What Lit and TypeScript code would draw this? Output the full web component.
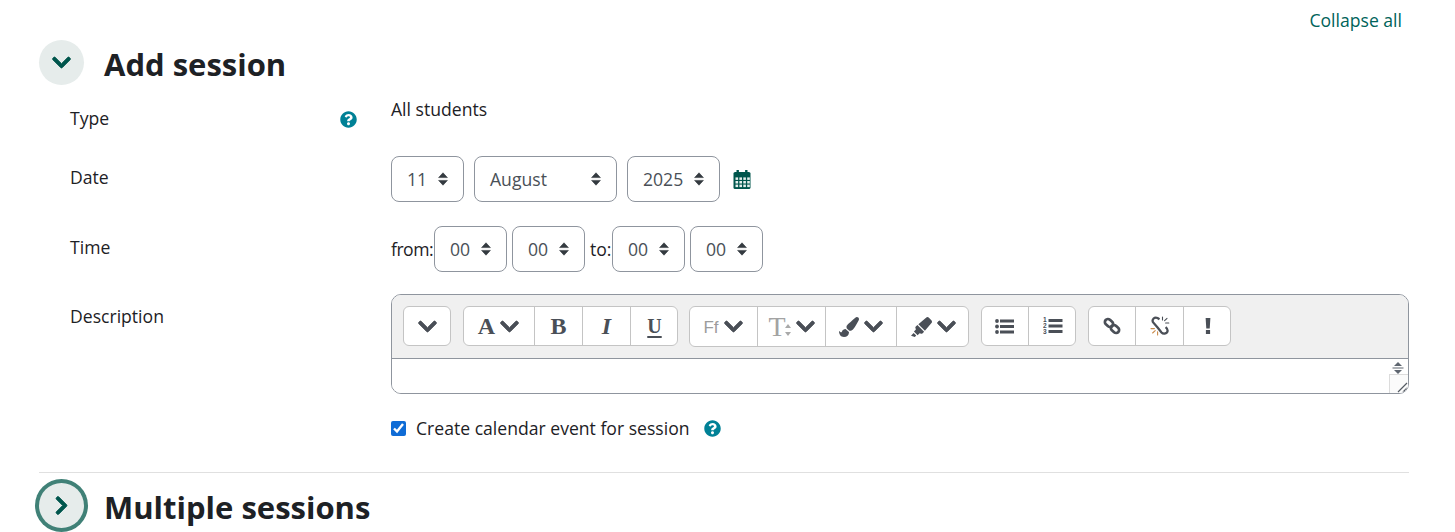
import { LitElement, html, svg, css, TemplateResult } from 'lit';
import { customElement } from 'lit/decorators.js';

const CHEVRON_DOWN =
	'M207.029 381.476L12.686 187.132c-9.373-9.373-9.373-24.569 0-33.941l22.667-22.667c9.357-9.357 24.522-9.375 33.901-.04L224 284.505l154.745-154.021c9.379-9.335 24.544-9.317 33.901.04l22.667 22.667c9.373 9.373 9.373 24.569 0 33.941L240.971 381.476c-9.373 9.372-24.569 9.372-33.942 0z';
const CHEVRON_RIGHT =
	'M285.476 272.971L91.132 467.314c-9.373 9.373-24.569 9.373-33.941 0l-22.667-22.667c-9.357-9.357-9.375-24.522-.04-33.901L188.505 256 34.484 101.255c-9.335-9.379-9.317-24.544.04-33.901l22.667-22.667c9.373-9.373 24.569-9.373 33.941 0L285.475 239.03c9.373 9.372 9.373 24.568.001 33.941z';
const QUESTION =
	'M504 256c0 136.997-111.043 248-248 248S8 392.997 8 256C8 119.083 119.043 8 256 8s248 111.083 248 248zM262.655 90c-54.497 0-89.255 22.957-116.549 63.758-3.536 5.286-2.353 12.415 2.715 16.258l34.699 26.31c5.205 3.947 12.621 3.008 16.665-2.122 17.864-22.658 30.113-35.797 57.303-35.797 20.429 0 45.698 13.148 45.698 32.958 0 14.976-12.363 22.667-32.534 33.976C247.128 238.528 216 254.941 216 296v4c0 6.627 5.373 12 12 12h56c6.627 0 12-5.373 12-12v-1.333c0-28.462 83.186-29.647 83.186-106.667 0-58.002-60.165-102-116.531-102zM256 338c-25.365 0-46 20.635-46 46 0 25.364 20.635 46 46 46s46-20.636 46-46c0-25.365-20.635-46-46-46z';
const BRUSH =
	'M167.02 309.34c-40.12 2.58-76.53 17.86-97.19 72.3-2.35 6.21-8 9.98-14.59 9.98-11.11 0-45.46-27.67-55.25-34.35C0 439.62 37.93 512 128 512c75.86 0 128-43.77 128-120.19 0-3.11-.65-6.08-.97-9.13l-88.01-73.34zM457.89 0c-15.16 0-29.37 6.71-40.21 16.45C213.27 199.05 192 203.34 192 257.09c0 13.7 3.25 26.76 8.73 38.7l63.82 53.18c7.21 1.8 14.64 3.03 22.39 3.03 62.11 0 98.11-45.47 211.16-256.46 7.38-14.35 13.9-29.85 13.9-45.99C512 20.64 486 0 457.89 0z';
const HIGHLIGHTER =
	'M0 479.98L99.92 512l35.45-35.45-67.04-67.04L0 479.98zm124.61-240.01a36.592 36.592 0 0 0-10.79 38.1l13.05 42.83-50.93 50.94 96.23 96.23 50.86-50.86 42.74 13.08c13.73 4.2 28.65-.01 38.15-10.78l35.55-41.64-173.34-173.34-41.52 35.44zm403.31-160.7l-63.2-63.2c-20.49-20.49-53.38-21.52-75.12-2.35L190.55 183.68l169.77 169.78L530.27 154.4c19.18-21.74 18.15-54.63-2.35-75.13z';

const icon = (d: string, w: number, h: number, cls: string, vb = '0 0 512 512') =>
	html`<svg class=${cls} width=${w} height=${h} viewBox=${vb} fill="currentColor"><path d=${d}></path></svg>`;

const chevron = () => icon(CHEVRON_DOWN, 19, 21, 'chev', '0 0 448 512');

const sortArrows = () => html`<svg class="sort" width="10" height="14" viewBox="0 0 10 14" fill="currentColor">
	<path d="M5 .8 L9.4 5.6 H.6 Z M5 13.2 L.6 8.4 H9.4 Z" stroke="currentColor" stroke-width=".6" stroke-linejoin="round"></path>
</svg>`;

const calendarIcon = () => html`<svg class="calendar" width="18" height="19" viewBox="0 0 18 19">
	<rect x="3.5" y="0" width="2.4" height="4" fill="#00564d"></rect>
	<rect x="12.1" y="0" width="2.4" height="4" fill="#00564d"></rect>
	<rect x=".5" y="2" width="17" height="17" rx="1.6" fill="#00564d"></rect>
	${[2.5, 6.4, 10.3, 14.2].map((x) =>
		[7.4, 11, 14.6].map((y) => svg`<rect x=${x} y=${y} width="2.6" height="2.5" fill="#e6f0ee"></rect>`),
	)}
</svg>`;

const listUl = svg`<circle cx="2" cy="3" r="1.9"></circle><circle cx="2" cy="8.5" r="1.9"></circle><circle cx="2" cy="14" r="1.9"></circle>
	<rect x="5" y="1.5" width="14" height="3"></rect><rect x="5" y="7" width="14" height="3"></rect><rect x="5" y="12.5" width="14" height="3"></rect>`;

const listOl = svg`<text x="0" y="5.4" font-size="6.6" font-weight="700" font-family="Liberation Sans, sans-serif">1</text>
	<text x="0" y="11.4" font-size="6.6" font-weight="700" font-family="Liberation Sans, sans-serif">2</text>
	<text x="0" y="17.4" font-size="6.6" font-weight="700" font-family="Liberation Sans, sans-serif">3</text>
	<rect x="5.5" y="2" width="14" height="3"></rect><rect x="5.5" y="7.5" width="14" height="3"></rect><rect x="5.5" y="13" width="14" height="3"></rect>`;

const chain = svg`<g fill="none" stroke="currentColor" stroke-width="2.7">
	<rect x="1.5" y="3" width="9" height="6" rx="3" transform="rotate(42 6 6)"></rect>
	<rect x="7.5" y="9" width="9" height="6" rx="3" transform="rotate(42 12 12)"></rect>
</g>`;

const brokenChain = svg`<path fill="none" stroke="currentColor" stroke-width="2.3" d="M9.5 3.2 L7.5 2 C4.5 .6 1.6 3.4 3 6.2 L8 12 L11.5 16.4 C13.5 18.6 17.6 17.6 17.6 14.5 C17.6 13.2 16.8 12.2 15.6 11.2"></path>
<g fill="none" stroke-width="1.1" stroke-linecap="round">
	<path d="M12.5 1 V4 M14.6 4.6 L17 2.4 M15.6 7 H18.8" stroke="#4a4f57"></path>
	<path d="M1 12.6 H4.4 M2.6 17 L5.2 14.6 M7.6 15.8 V19" stroke="#c98a4a"></path>
</g>`;

interface ToolButton {
	size: string;
	content: TemplateResult;
}

@customElement('app-root')
export class AppRoot extends LitElement {
	private select(value: string, size: string) {
		return html`<div class="select ${size}"><span>${value}</span>${sortArrows()}</div>`;
	}

	private help() {
		return icon(QUESTION, 17, 17, 'help');
	}

	private toolbar(): ToolButton[][] {
		return [
			[{ size: 'b48', content: chevron() }],
			[
				{ size: 'b71', content: html`<span class="glyph bold">A</span>${chevron()}` },
				{ size: 'b48', content: html`<span class="glyph bold">B</span>` },
				{ size: 'b48', content: html`<span class="glyph italic">I</span>` },
				{ size: 'b48', content: html`<span class="glyph under">U</span>` },
			],
			[
				{ size: 'b68', content: html`<span class="ff">Ff</span>${chevron()}` },
				{
					size: 'b68',
					content: html`<span class="glyph tee">T</span
						><svg class="tee-arrows" width="6" height="14" viewBox="0 0 6 14" fill="#a9a9a9">
							<path d="M3 1 L6 5 H0 Z M3 13 L0 9 H6 Z"></path></svg
						>${chevron()}`,
				},
				{ size: 'b71', content: html`${icon(BRUSH, 20, 20, 'tool')}${chevron()}` },
				{ size: 'b73', content: html`${icon(HIGHLIGHTER, 21, 20, 'tool', '0 0 544 512')}${chevron()}` },
			],
			[
				{ size: 'b47', content: html`<svg width="19" height="17" viewBox="0 0 19 17" fill="currentColor">${listUl}</svg>` },
				{ size: 'b48', content: html`<svg width="20" height="18" viewBox="0 0 20 18" fill="currentColor">${listOl}</svg>` },
			],
			[
				{ size: 'b47', content: html`<svg width="18" height="18" viewBox="0 0 18 18">${chain}</svg>` },
				{ size: 'b48', content: html`<svg width="20" height="20" viewBox="0 0 20 20">${brokenChain}</svg>` },
				{
					size: 'b48',
					content: html`<svg width="6" height="16" viewBox="0 0 6 16" fill="currentColor">
						<path d="M.6 0 H5.4 L4.7 10.6 H1.3 Z"></path><rect x=".9" y="12" width="4.2" height="4"></rect>
					</svg>`,
				},
			],
		];
	}

	protected render(): TemplateResult {
		return html`<div class="page">
			<div class="collapse-row"><a>Collapse all</a></div>

			<div class="section-head">
				<div class="toggle">${icon(CHEVRON_DOWN, 19, 21, 'toggle-icon', '0 0 448 512')}</div>
				<h3>Add session</h3>
			</div>

			<div class="row type-row">
				<div class="label"><span>Type</span>${this.help()}</div>
				<div class="static">All students</div>
			</div>

			<div class="row">
				<div class="label"><span>Date</span></div>
				<div class="controls">
					${this.select('11', 'w73')}${this.select('August', 'w143')}${this.select('2025', 'w93')}
					${calendarIcon()}
				</div>
			</div>

			<div class="row time-row">
				<div class="label"><span>Time</span></div>
				<div class="controls tight">
					<span class="word from">from:</span>
					${this.select('00', 'w73')}${this.select('00', 'w73')}
					<span class="word to">to:</span>
					${this.select('00', 'w73')}${this.select('00', 'w73')}
				</div>
			</div>

			<div class="row desc-row">
				<div class="label"><span>Description</span></div>
				<div class="editor">
					<div class="toolbar">
						${this.toolbar().map(
							(group) => html`<div class="group">
								${group.map((b) => html`<div class="btn ${b.size}">${b.content}</div>`)}
							</div>`,
						)}
					</div>
					<div class="content">
						<svg class="spin" width="14" height="12" viewBox="0 0 14 12" fill="#5f6670">
							<path d="M7 0 L11 4 H3 Z M7 12 L3 8 H11 Z"></path>
							<rect x="1.5" y="5.5" width="11" height="1"></rect>
						</svg>
						<div class="grip">
							<svg width="11" height="11" viewBox="0 0 11 11" stroke="#555b63" stroke-width="1.2" fill="none">
								<path d="M1 10 L10 1 M6 10 L10 6"></path>
							</svg>
						</div>
					</div>
				</div>
			</div>

			<div class="check-row">
				<input type="checkbox" checked />
				<span>Create calendar event for session</span>
				${this.help()}
			</div>

			<div class="divider"></div>

			<div class="section-head second">
				<div class="toggle focused">${icon(CHEVRON_RIGHT, 15, 21, 'toggle-icon', '0 0 320 512')}</div>
				<h3>Multiple sessions</h3>
			</div>
		</div>`;
	}

	static styles = css`
		:host {
			display: block;
			font-family: 'Open Sans', 'Noto Sans', sans-serif;
			font-size: 17.6px;
			line-height: 26px;
			color: #1d2125;
		}

		* {
			box-sizing: border-box;
		}

		.page {
			height: 532px;
			overflow: hidden;
			padding: 0 46px 0 39px;
		}

		.collapse-row {
			height: 40px;
			padding: 7px 7px 0 0;
			text-align: right;
			color: #00635a;
		}

		.section-head {
			display: flex;
			align-items: center;
			gap: 20px;
			height: 45px;
			margin-bottom: 12px;
		}

		.section-head.second {
			margin-bottom: 0;
		}

		h3 {
			margin: 4px 0 0;
			font-size: 31px;
			line-height: 45px;
			font-weight: 700;
		}

		.toggle {
			width: 45px;
			height: 45px;
			flex: none;
			border-radius: 50%;
			background: #e6eceb;
			color: #00564d;
			display: flex;
			align-items: center;
			justify-content: center;
		}

		.toggle.focused {
			box-shadow: 0 0 0 4px #408177;
		}

		.toggle-icon path,
		.chev path {
			stroke: currentColor;
			stroke-width: 22px;
		}

		.row {
			display: grid;
			grid-template-columns: 352px 1fr;
			margin-bottom: 24px;
		}

		.type-row {
			margin-bottom: 25px;
		}

		.time-row {
			margin-bottom: 22px;
		}

		.desc-row {
			margin-bottom: 21px;
		}

		.label {
			display: flex;
			justify-content: space-between;
			align-items: flex-start;
			padding: 8px 34px 0 31px;
		}

		.label .help {
			margin-top: 6px;
		}

		.desc-row .label {
			padding-top: 9px;
		}

		.help {
			color: #008196;
			flex: none;
		}

		.static {
			margin-top: -1px;
			line-height: 26px;
		}

		.controls {
			display: flex;
			align-items: center;
			gap: 10px;
		}

		.controls.tight {
			gap: 5px;
		}

		.word {
			white-space: nowrap;
		}

		.word.from {
			width: 38px;
			letter-spacing: -0.5px;
		}

		.word.to {
			width: 17px;
		}

		.select {
			display: flex;
			align-items: center;
			justify-content: space-between;
			height: 46px;
			padding: 0 15px;
			border: 1px solid #8f959e;
			border-radius: 8px;
			color: #495057;
			background: #fff;
		}

		.w73 {
			width: 73px;
		}

		.w93 {
			width: 93px;
		}

		.w143 {
			width: 143px;
		}

		.sort {
			color: #343a40;
			flex: none;
		}

		.calendar {
			margin-left: 3px;
		}

		.editor {
			position: relative;
			height: 100px;
			border: 1px solid #8f959e;
			border-radius: 10px;
			overflow: hidden;
		}

		.toolbar {
			display: flex;
			align-items: flex-start;
			gap: 12px;
			height: 64px;
			padding: 11px;
			background: #f0f0f0;
			border-bottom: 1px solid #8f959e;
		}

		.group {
			display: flex;
			height: 40px;
			border: 1px solid #c4c4c4;
			border-radius: 6px;
			background: #fff;
			color: #4a4f57;
		}

		.group:nth-child(3) {
			height: 41px;
			margin-left: -1px;
		}

		.btn {
			display: flex;
			align-items: center;
			justify-content: center;
			gap: 5px;
			border-left: 1px solid #c4c4c4;
		}

		.btn:first-child {
			border-left: 0;
			margin-left: -1px;
		}

		.btn:last-child {
			margin-right: -1px;
		}

		.b47 {
			width: 47px;
		}

		.b48 {
			width: 48px;
		}

		.b68 {
			width: 68px;
		}

		.b71 {
			width: 71px;
		}

		.b73 {
			width: 73px;
		}

		.glyph {
			font-family: 'Liberation Serif', serif;
			font-size: 24px;
			line-height: 24px;
		}

		.bold {
			font-weight: 700;
		}

		.italic {
			font-style: italic;
			font-weight: 700;
		}

		.under {
			font-size: 20px;
			font-weight: 700;
			text-decoration: underline;
			text-underline-offset: 3px;
		}

		.tee {
			font-weight: 400;
			font-size: 28px;
			color: #a3a3a3;
		}

		.tee-arrows {
			margin: 6px 0 0 -6px;
		}

		.ff {
			font-size: 17px;
			color: #9c9c9c;
			font-family: 'Liberation Sans', sans-serif;
			margin-top: 2px;
		}

		.chev {
			flex: none;
		}

		.content {
			position: relative;
			height: 34px;
			background: #fff;
		}

		.spin {
			position: absolute;
			right: 3px;
			top: 3px;
		}

		.grip {
			position: absolute;
			right: 0;
			bottom: 0;
			width: 19px;
			height: 19px;
			background: #fbfbfb;
			border-left: 1px solid #dcdcdc;
			border-top: 1px solid #dcdcdc;
			display: flex;
			align-items: flex-end;
			justify-content: flex-end;
		}

		.check-row {
			display: flex;
			align-items: center;
			height: 26px;
			margin-left: 352px;
		}

		.check-row input {
			width: 15px;
			height: 15px;
			margin: 0 10px 0 0;
			accent-color: #0f6cd6;
		}

		.check-row .help {
			margin-left: 14px;
		}

		.divider {
			height: 1px;
			margin: 31px 0 10px;
			background: #e0e0e0;
		}
	`;
}
